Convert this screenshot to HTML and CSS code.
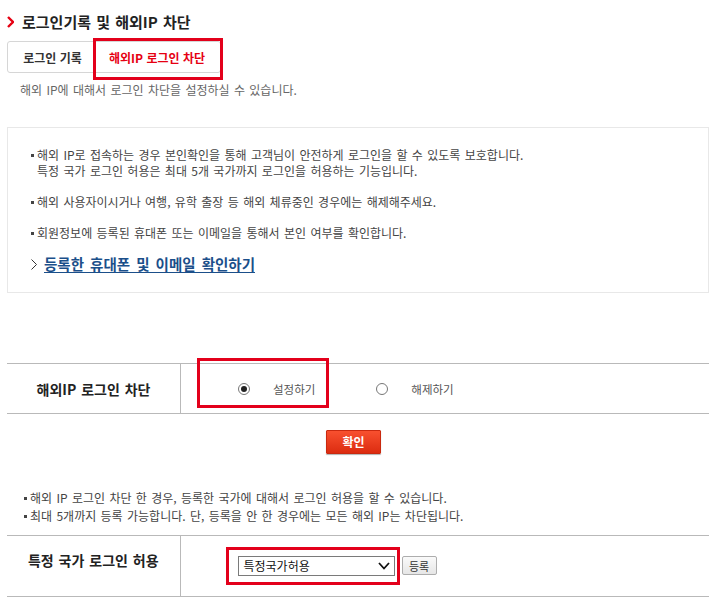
FILE: index.html
```html
<!DOCTYPE html>
<html lang="ko">
<head>
    <meta charset="UTF-8">
    <meta name="viewport" content="width=device-width, initial-scale=1.0">
    <title>로그인기록 및 해외IP 차단</title>
    <link rel="stylesheet" href="styles.css">
</head>
<body>
    <div class="wrap">
        <!-- 제목 -->
        <h2 class="tit">
            <svg width="7" height="12" viewBox="0 0 7 12"><polyline points="1,1 6,6 1,11" fill="none" stroke="#e60012" stroke-width="2.4"/></svg>
            로그인기록 및 해외IP 차단
        </h2>

        <!-- 탭 -->
        <div class="tabs">
            <a class="tab">로그인 기록</a>
            <a class="tab on">해외IP 로그인 차단</a>
            <span class="mark mark-tab"></span>
        </div>
        <p class="desc">해외 IP에 대해서 로그인 차단을 설정하실 수 있습니다.</p>

        <!-- 안내 박스 -->
        <div class="info">
            <ul class="dots">
                <li>해외 IP로 접속하는 경우 본인확인을 통해 고객님이 안전하게 로그인을 할 수 있도록 보호합니다.<br>특정 국가 로그인 허용은 최대 5개 국가까지 로그인을 허용하는 기능입니다.</li>
                <li>해외 사용자이시거나 여행, 유학 출장 등 해외 체류중인 경우에는 해제해주세요.</li>
                <li>회원정보에 등록된 휴대폰 또는 이메일을 통해서 본인 여부를 확인합니다.</li>
            </ul>
            <p class="more">
                <svg width="6" height="11" viewBox="0 0 6 11"><polyline points="0.5,0.5 5.5,5.5 0.5,10.5" fill="none" stroke="#333" stroke-width="1"/></svg>
                <a href="#">등록한 휴대폰 및 이메일 확인하기</a>
            </p>
        </div>

        <!-- 해외IP 차단 설정 -->
        <table class="set">
            <tr>
                <th>해외IP 로그인 차단</th>
                <td>
                    <div class="radios">
                        <label><input type="radio" name="block" checked><span>설정하기</span></label>
                        <label><input type="radio" name="block"><span>해제하기</span></label>
                        <span class="mark mark-radio"></span>
                    </div>
                </td>
            </tr>
        </table>
        <div class="btns">
            <button class="btn-red">확인</button>
        </div>

        <ul class="notes">
            <li>해외 IP 로그인 차단 한 경우, 등록한 국가에 대해서 로그인 허용을 할 수 있습니다.</li>
            <li>최대 5개까지 등록 가능합니다. 단, 등록을 안 한 경우에는 모든 해외 IP는 차단됩니다.</li>
        </ul>

        <!-- 특정 국가 허용 -->
        <table class="set set2">
            <tr>
                <th>특정 국가 로그인 허용</th>
                <td>
                    <div class="country">
                        <div class="sel">
                            <span>특정국가허용</span>
                            <svg width="12" height="8" viewBox="0 0 12 8"><polyline points="1,1 6,6.5 11,1" fill="none" stroke="#111" stroke-width="1.8"/></svg>
                        </div>
                        <button class="btn-gray">등록</button>
                        <span class="mark mark-sel"></span>
                    </div>
                </td>
            </tr>
        </table>
    </div>
</body>
</html>
```

FILE: styles.css
```css
body{
    margin: 0;
    background: #fff;
    font-family: "Noto Sans CJK KR", "Noto Sans", sans-serif;
    color: #555;
}
ul{
    margin: 0;
    padding: 0;
    list-style: none;
}
p{
    margin: 0;
}
.wrap{
    width: 702px;
    margin-left: 7px;
}
/* 빨간 강조 박스 */
.mark{
    position: absolute;
    box-sizing: border-box;
    border: 3px solid #e3001b;
    pointer-events: none;
}
.tit{
    display: flex;
    align-items: center;
    gap: 8px;
    margin: 0;
    padding-top: 12px;
    height: 20px;
    line-height: 20px;
    font-size: 15px;
    font-weight: bold;
    color: #222;
    word-spacing: 1px;
}
.tabs{
    position: relative;
    display: flex;
    width: 214px;
    height: 32px;
    margin-top: 9px;
    box-sizing: border-box;
    border: 1px solid #d6d6d6;
    border-radius: 3px;
}
.tab{
    display: flex;
    align-items: center;
    justify-content: center;
    font-size: 12px;
    font-weight: bold;
    color: #333;
}
.tab:first-child{
    width: 85px;
    padding-left: 4px;
    box-sizing: border-box;
}
.tab.on{
    flex: 1;
    color: #e60012;
    border-left: 1px solid #d6d6d6;
}
.mark-tab{
    left: 85px;
    top: -4px;
    width: 130px;
    height: 42px;
}
.desc{
    margin-top: 9px;
    padding-left: 13px;
    font-size: 12px;
    line-height: 16px;
    color: #666;
    word-spacing: 1px;
}
.info{
    margin-top: 29px;
    border: 1px solid #e8e8e8;
    padding: 19px 20px 18px 23px;
    font-size: 12px;
    line-height: 16px;
    color: #444;
    word-spacing: 1px;
}
.dots li{
    position: relative;
    padding-left: 6px;
    margin-bottom: 15px;
}
.dots li::before{
    content: "";
    position: absolute;
    left: 0;
    top: 7px;
    width: 3px;
    height: 3px;
    background: #444;
}
.more{
    display: flex;
    align-items: center;
    gap: 7px;
    margin-top: -2px;
    height: 20px;
}
.more a{
    font-size: 14.5px;
    font-weight: bold;
    color: #1b4f8a;
    text-decoration: underline;
    text-underline-offset: 2px;
    word-spacing: 2px;
}
.set{
    width: 100%;
    border-collapse: collapse;
    margin-top: 70px;
    border-top: 1px solid #b9b9b9;
    border-bottom: 1px solid #b9b9b9;
}
.set th{
    width: 173px;
    height: 49px;
    padding: 0;
    border-right: 1px solid #b9b9b9;
    font-size: 14px;
    font-weight: bold;
    color: #222;
    text-align: center;
    word-spacing: 1px;
}
.set td{
    padding: 0 0 0 57px;
}
.radios{
    position: relative;
    display: flex;
    align-items: center;
    font-size: 11.5px;
    color: #555;
}
.radios label{
    display: flex;
    align-items: center;
    gap: 23px;
    margin-right: 61px;
}
.radios input{
    appearance: none;
    margin: 0;
    width: 12px;
    height: 12px;
    border: 1px solid #777;
    border-radius: 50%;
    box-sizing: border-box;
    background: #fff;
    display: grid;
    place-content: center;
}
.radios input:checked::before{
    content: "";
    width: 6px;
    height: 6px;
    border-radius: 50%;
    background: #222;
}
.mark-radio{
    left: -41px;
    top: -23px;
    width: 132px;
    height: 50px;
}
.btns{
    margin-top: 14px;
    padding-right: 9px;
    text-align: center;
}
.btn-red{
    width: 55px;
    height: 24px;
    border: 1px solid #c9290f;
    border-radius: 1px;
    background: linear-gradient(#f8502f, #dc2c10);
    box-shadow: 0 1px 1px rgba(0,0,0,0.3);
    color: #fff;
    font-family: inherit;
    font-size: 12px;
    font-weight: bold;
    padding: 0;
}
.notes{
    margin-top: 35px;
    padding-left: 23px;
    font-size: 12px;
    line-height: 18px;
    color: #444;
    word-spacing: 1px;
}
.notes li{
    position: relative;
}
.notes li::before{
    content: "";
    position: absolute;
    left: -6px;
    top: 8px;
    width: 3px;
    height: 3px;
    background: #444;
}
.set2{
    margin-top: 10px;
}
.set2 th{
    height: 61px;
    padding-bottom: 12px;
    box-sizing: border-box;
}
.country{
    position: relative;
    display: flex;
    align-items: center;
    gap: 7px;
}
.sel{
    display: flex;
    align-items: center;
    justify-content: space-between;
    box-sizing: border-box;
    width: 157px;
    height: 20px;
    padding: 0 4px 0 5px;
    border: 1px solid #7a7a7a;
    background: #fff;
    font-size: 12px;
    color: #111;
}
.btn-gray{
    width: 35px;
    height: 19px;
    padding: 0;
    border: 1px solid #adadad;
    border-radius: 2px;
    background: linear-gradient(#fafafa, #e6e6e6);
    font-family: inherit;
    font-size: 11px;
    color: #333;
}
.mark-sel{
    left: -12px;
    top: -9px;
    width: 174px;
    height: 38px;
}
```
